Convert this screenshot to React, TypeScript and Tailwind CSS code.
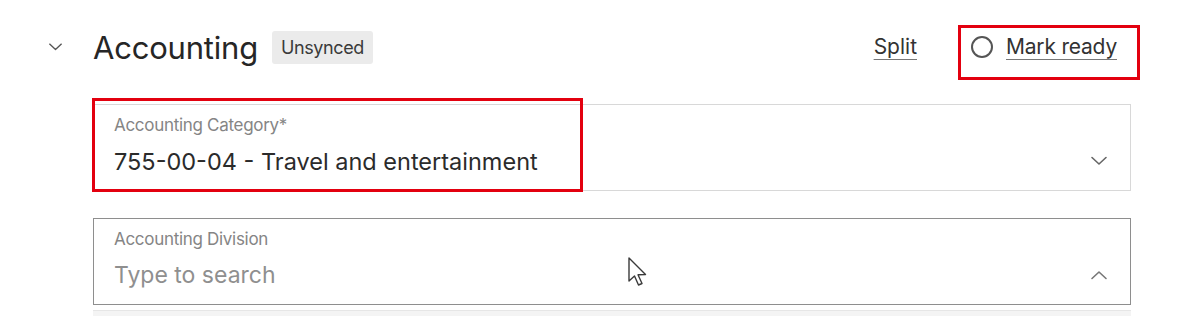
import React from 'react';

function Chevron({ up = false, className = '' }: { up?: boolean; className?: string }) {
  return (
    <svg width="18" height="10" viewBox="0 0 18 10" className={className} fill="none">
      <path
        d={up ? 'M2 8.5 L9 2 L16 8.5' : 'M2 1.5 L9 8 L16 1.5'}
        stroke="currentColor"
        strokeWidth="1.6"
        strokeLinecap="round"
        strokeLinejoin="round"
      />
    </svg>
  );
}

function Cursor() {
  return (
    <svg width="24" height="32" viewBox="0 0 24 32" className="absolute left-[627px] top-[256px]" fill="none">
      <path
        d="M2 2 L2 25 L7.5 20 L11.5 29 L15 27.5 L11 18.8 L18.5 18.5 Z"
        fill="white"
        stroke="#3a3a3a"
        strokeWidth="1.4"
        strokeLinejoin="round"
      />
    </svg>
  );
}

export default function App() {
  return (
    <div className="relative w-[1200px] h-[316px] overflow-hidden bg-white font-['Inter','Liberation_Sans',sans-serif]">
      <div className="pl-[48px] pt-[27px]">
        {/* header */}
        <div className="flex items-center h-10 w-[1083px] pr-[14px]">
          <div className="w-[45px] text-[#555]">
            <Chevron className="w-[15px]" />
          </div>
          <h2 className="text-[31px] leading-none text-[#262626] tracking-[-0.2px]">Accounting</h2>
          <span className="ml-[14px] h-[33px] px-[9px] flex items-center rounded-[3px] bg-[#ebebeb] text-[18px] text-[#3a3a3a] tracking-[-0.4px]">
            Unsynced
          </span>
          <div className="flex-1" />
          <button className="text-[21px] text-[#333] underline underline-offset-[5px] decoration-[#777] decoration-1">
            Split
          </button>
          <div className="relative ml-[54px] flex items-center">
            <span className="w-[22px] h-[22px] rounded-full border-2 border-[#555]" />
            <button className="ml-[13px] text-[21px] text-[#333] underline underline-offset-[5px] decoration-[#777] decoration-1 tracking-[-0.2px]">
              Mark ready
            </button>
            <div className="absolute -left-[13px] -top-[6px] w-[182px] h-[55px] border-[3px] border-[#e3000f] pointer-events-none" />
          </div>
        </div>

        {/* fields */}
        <div className="ml-[45px] w-[1038px] mt-[37px]">
          <div className="relative">
            <div className="h-[87px] border border-[#d8d8d8] pl-[20px] pr-[22px] flex">
              <div className="flex-1 pt-[12px]">
                <div className="text-[17px] text-[#858585] leading-none tracking-[-0.3px]">Accounting Category*</div>
                <div className="mt-[16px] text-[23.5px] text-[#2b2b2b] leading-none">
                  755-00-04 - Travel and entertainment
                </div>
              </div>
              <Chevron className="self-center text-[#666] mt-[26px]" />
            </div>
            <div className="absolute -left-[1px] -top-[6px] w-[491px] h-[94px] border-[3px] border-[#e3000f] pointer-events-none" />
          </div>

          <div className="mt-[27px] h-[87px] border-[1.5px] border-[#8e8e8e] pl-[20px] pr-[22px] flex">
            <div className="flex-1 pt-[12px]">
              <div className="text-[17px] text-[#858585] leading-none tracking-[-0.3px]">Accounting Division</div>
              <div className="mt-[16px] text-[23px] text-[#8f8f8f] leading-none">Type to search</div>
            </div>
            <Chevron up className="self-center text-[#777] mt-[26px]" />
          </div>

          <div className="mt-[5px] h-[12px] bg-[#f4f4f4] border-t border-[#e6e6e6]" />
        </div>
      </div>
      <Cursor />
    </div>
  );
}
